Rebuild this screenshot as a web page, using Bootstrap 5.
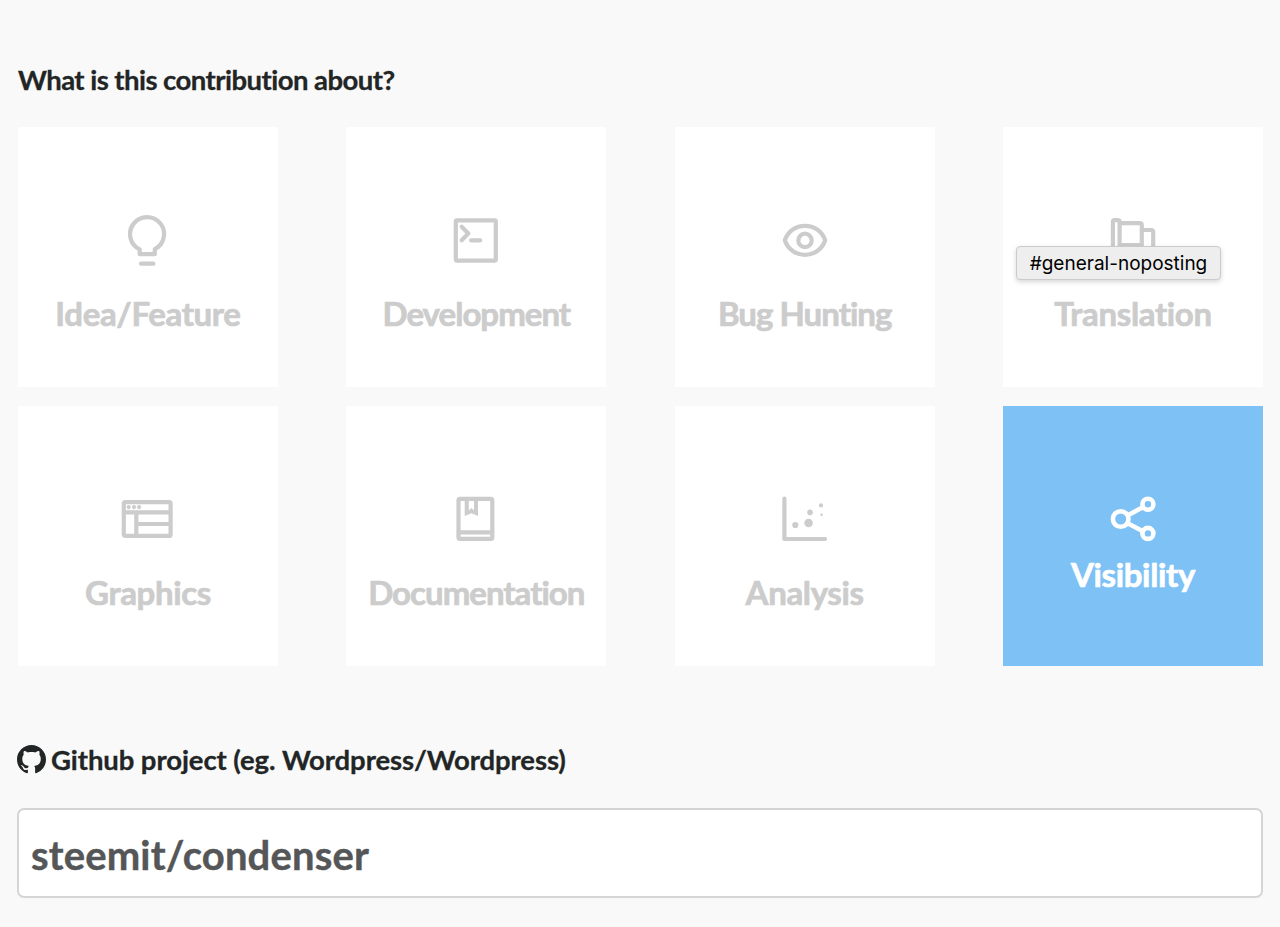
<!DOCTYPE html>
<html lang="en">
<head>
    <meta charset="UTF-8">
    <meta name="viewport" content="width=device-width, initial-scale=1.0">
    <title>New contribution</title>

    <link href="https://cdn.jsdelivr.net/npm/bootstrap@5.3.0/dist/css/bootstrap.min.css" rel="stylesheet">

    <style>
        body {
            background-color: #f9f9f9;
            color: #222525;
            font-family: Lato, "Open Sans", sans-serif;
            font-variant-ligatures: none;
        }

        .contribution-form {
            padding: 60px 17px 0 18px;
        }

        .form-title {
            font-size: 27.5px;
            line-height: 40px;
            letter-spacing: -0.54px;
            -webkit-text-stroke: 0.3px currentColor;
        }

        .tiles {
            grid-template-columns: repeat(4, 260px);
            row-gap: 19px;
            margin-top: 27px;
        }

        .tile {
            height: 260px;
            padding-top: 81px;
            background-color: #fff;
            color: #ccc;
            font-size: 33px;
        }

        .tile svg {
            width: 64px;
            height: 64px;
            fill: none;
            stroke: currentColor;
            stroke-width: 4.2;
            stroke-linecap: round;
            stroke-linejoin: round;
        }

        .tile svg .solid {
            fill: currentColor;
            stroke: none;
        }

        .tile-label {
            margin-top: 21px;
            line-height: 40px;
            letter-spacing: -0.35px;
            -webkit-text-stroke: 0.7px currentColor;
        }

        .tile-label.tight {
            letter-spacing: -0.98px;
        }

        .tile.active {
            background-color: #7dc1f5;
            color: #fff;
        }

        .tile.active svg {
            stroke-width: 4.6;
        }

        .tile.active .tile-label {
            margin-top: 3px;
        }

        .hint {
            top: 119px;
            left: 13px;
            width: 205px;
            height: 34px;
            background-color: #eee;
            border: 1px solid #cbcbcb;
            box-shadow: 0 2px 5px rgba(0, 0, 0, 0.16);
            color: #000;
            font: 400 19px/33px Inter, sans-serif;
        }

        .project-label {
            margin-top: 74px;
            letter-spacing: -0.08px;
        }

        .project-label svg {
            margin: -2px 5px 0 -1px;
        }

        .project-input {
            width: 1246px;
            height: 90px;
            margin: 28px 0 0 -1px;
            padding: 4px 13px 0 12px;
            border: 2px solid #d5d5d5;
            border-radius: 7px;
            color: #555657 !important;
            font-size: 40px;
            letter-spacing: 0.17px;
            -webkit-text-stroke: 0.4px currentColor;
        }
    </style>
</head>
<body>

    <form class="contribution-form">
        <h2 class="form-title fw-bold mb-0">What is this contribution about?</h2>

        <div class="tiles d-grid justify-content-between">
            <div class="tile d-flex flex-column align-items-center">
                <svg viewBox="0 0 64 64">
                    <path d="M23.7 41.4A17 17 0 1 1 38.8 41.2V46.2H23.7Z"/>
                    <path d="M25 55.7H37.4"/>
                </svg>
                <div class="tile-label fw-bold">Idea/Feature</div>
            </div>
            <div class="tile d-flex flex-column align-items-center">
                <svg viewBox="0 0 64 64">
                    <rect x="11.8" y="12.4" width="40" height="40.2" rx="1"/>
                    <path d="M17.7 18.7L24.4 25.4L17.7 32.3M27.2 32.4H36.2"/>
                </svg>
                <div class="tile-label tight fw-bold">Development</div>
            </div>
            <div class="tile d-flex flex-column align-items-center">
                <svg viewBox="0 0 64 64">
                    <path d="M11.8 32.3C15 23 23 17.8 32 17.8S49 23 52.2 32.3C49 41.6 41 46.8 32 46.8S15 41.6 11.8 32.3Z"/>
                    <circle cx="32" cy="32.4" r="6.7"/>
                </svg>
                <div class="tile-label tight fw-bold">Bug Hunting</div>
            </div>
            <div class="tile d-flex flex-column align-items-center position-relative">
                <svg viewBox="0 0 64 64">
                    <path d="M11.9 50V14Q11.9 12.2 13.7 12.2H16.6Q18.6 12.2 18.6 14V50M18.6 15.2H38.8Q40.8 15.2 40.8 17.2V37H18.6M40.8 22H50.2Q52.2 22 52.2 24V50"/>
                </svg>
                <div class="tile-label fw-bold">Translation</div>
                <div class="hint position-absolute rounded-1 text-center">#general-noposting</div>
            </div>
            <div class="tile d-flex flex-column align-items-center">
                <svg viewBox="0 0 64 64">
                    <rect x="7.8" y="15.1" width="46.8" height="33.8" rx="1.5"/>
                    <path d="M8 25.4H54M20.3 25.4V49M20.3 37H54"/>
                    <g class="solid"><circle cx="12.7" cy="20.1" r="2.1"/><circle cx="18" cy="20.1" r="2.1"/><circle cx="23.1" cy="20.1" r="2.1"/></g>
                </svg>
                <div class="tile-label fw-bold">Graphics</div>
            </div>
            <div class="tile d-flex flex-column align-items-center">
                <svg viewBox="0 0 64 64">
                    <rect x="14.5" y="11.8" width="33.8" height="40.1" rx="1.5"/>
                    <path d="M15 45.3H48"/>
                    <path class="solid" fill-rule="evenodd" d="M20.7 11H34V29L27.4 26.3L20.7 29ZM24.8 13.8V23.5L27.4 21L30 23.5V13.8Z"/>
                </svg>
                <div class="tile-label tight fw-bold">Documentation</div>
            </div>
            <div class="tile d-flex flex-column align-items-center">
                <svg viewBox="0 0 64 64">
                    <path d="M11.4 11.6V52H52"/>
                    <g class="solid"><circle cx="22.3" cy="38" r="3.1"/><circle cx="35.6" cy="36" r="4.3"/><circle cx="37" cy="25.4" r="2.8"/><circle cx="48" cy="18.4" r="2.1"/><circle cx="48.6" cy="27.7" r="1.3"/></g>
                </svg>
                <div class="tile-label fw-bold">Analysis</div>
            </div>
            <div class="tile active d-flex flex-column align-items-center">
                <svg viewBox="0 0 64 64">
                    <circle cx="19.7" cy="32" r="7.8"/>
                    <circle cx="46.9" cy="17.3" r="5.5"/>
                    <circle cx="46.9" cy="46.4" r="5.5"/>
                    <path d="M27 28.2L41.8 20.2M26.6 36.2L42 44.2"/>
                </svg>
                <div class="tile-label fw-bold">Visibility</div>
            </div>
        </div>

        <label for="project" class="project-label form-title fw-bold d-flex align-items-center">
            <svg width="29" height="29" viewBox="0 0 16 16" fill="currentColor">
                <path d="M8 0C3.58 0 0 3.58 0 8c0 3.54 2.29 6.53 5.47 7.59.4.07.55-.17.55-.38 0-.19-.01-.82-.01-1.49-2.01.37-2.53-.49-2.69-.94-.09-.23-.48-.94-.82-1.13-.28-.15-.68-.52-.01-.53.63-.01 1.08.58 1.23.82.72 1.21 1.87.87 2.33.66.07-.52.28-.87.51-1.07-1.78-.2-3.64-.89-3.64-3.95 0-.87.31-1.59.82-2.15-.08-.2-.36-1.02.08-2.12 0 0 .67-.21 2.2.82.64-.18 1.32-.27 2-.27s1.36.09 2 .27c1.53-1.04 2.2-.82 2.2-.82.44 1.1.16 1.92.08 2.12.51.56.82 1.27.82 2.15 0 3.07-1.87 3.75-3.65 3.95.29.25.54.73.54 1.48 0 1.07-.01 1.93-.01 2.2 0 .21.15.46.55.38A8.01 8.01 0 0 0 16 8c0-4.42-3.58-8-8-8z"/>
            </svg>
            <span>Github project (eg. Wordpress/Wordpress)</span>
        </label>
        <input type="text" id="project" class="project-input form-control fw-bold" value="steemit/condenser">
    </form>

    <script src="https://cdn.jsdelivr.net/npm/bootstrap@5.3.0/dist/js/bootstrap.bundle.min.js"></script>
</body>
</html>
